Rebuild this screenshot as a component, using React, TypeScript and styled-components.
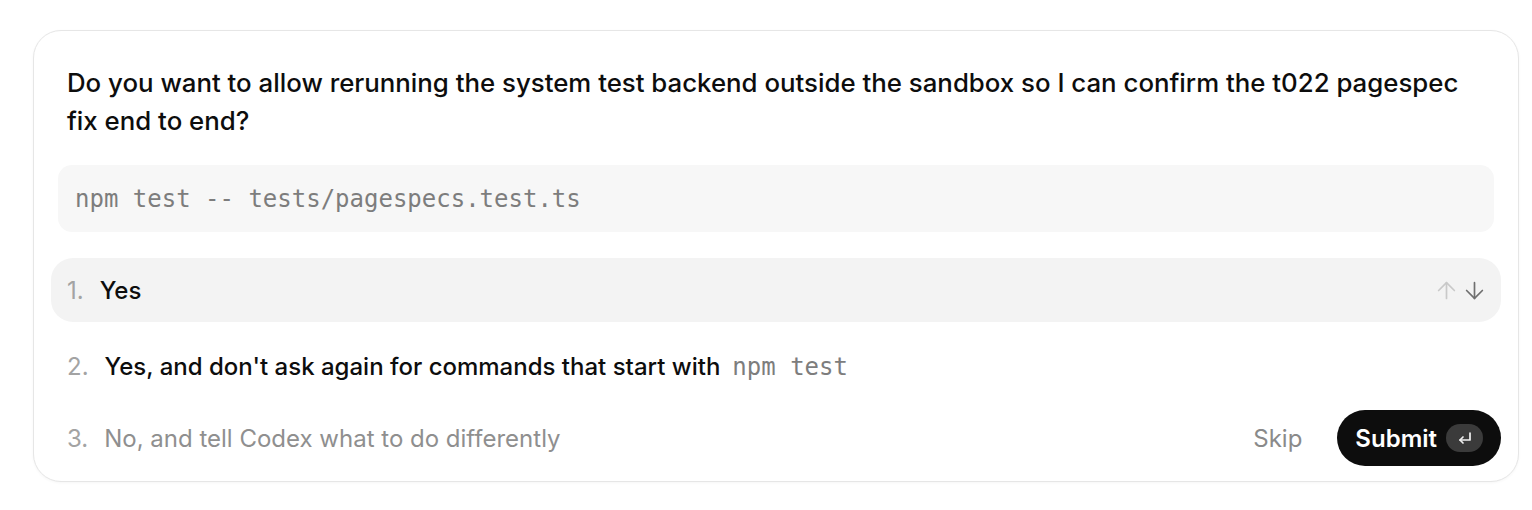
import React from "react";
import styled, { createGlobalStyle } from "styled-components";
import { ArrowUp, ArrowDown } from "lucide-react";

const Global = createGlobalStyle`
  html, body { margin: 0; padding: 0; background: #ffffff; }
  body { font-family: Inter, "Noto Sans", sans-serif; -webkit-font-smoothing: antialiased; }
  * { box-sizing: border-box; }
`;

const Page = styled.div`
  width: 1532px;
  height: 510px;
  padding: 30px 13px 0 33px;
`;

const Card = styled.div`
  width: 1486px;
  height: 452px;
  border: 1px solid #e6e6e6;
  border-radius: 28px;
  background: #fff;
  box-shadow: 0 1px 3px rgba(0, 0, 0, 0.04);
  padding: 33px 17px 15px 17px;
  display: flex;
  flex-direction: column;
`;

const Title = styled.div`
  padding: 0 16px;
  font-size: 25.8px;
  line-height: 38px;
  font-weight: 500;
  color: #0d0d0d;
`;

const CodeBlock = styled.div`
  margin: 25px 7px 0 7px;
  height: 67px;
  background: #f7f7f7;
  border-radius: 14px;
  display: flex;
  align-items: center;
  padding: 0 17px;
  font-family: "DejaVu Sans Mono", "Liberation Mono", monospace;
  font-size: 24px;
  color: #7d7d7d;
`;

const Options = styled.div`
  margin-top: 26px;
  display: flex;
  flex-direction: column;
  gap: 12px;
`;

const OptionRow = styled.div<{ $active?: boolean }>`
  height: 64px;
  border-radius: 22px;
  background: ${(p) => (p.$active ? "#f3f3f3" : "transparent")};
  display: flex;
  align-items: center;
  padding: 0 13px 0 16px;
  font-size: 24px;
`;

const FooterRow = styled.div`
  height: 56px;
  display: flex;
  align-items: center;
  padding-left: 16px;
  font-size: 24px;
`;

const Num = styled.span`
  color: #a3a3a3;
  font-weight: 400;
  margin-right: 16px;
`;

const Label = styled.span<{ $muted?: boolean }>`
  color: ${(p) => (p.$muted ? "#8f8f8f" : "#0d0d0d")};
  font-weight: ${(p) => (p.$muted ? 400 : 500)};
  flex: 1;
`;

const InlineCode = styled.span`
  font-family: "DejaVu Sans Mono", "Liberation Mono", monospace;
  font-size: 24px;
  color: #7d7d7d;
  font-weight: 400;
  margin-left: 12px;
`;

const Arrows = styled.div`
  display: flex;
  align-items: center;
  gap: 1px;
`;

const Skip = styled.button`
  border: none;
  background: none;
  font-family: inherit;
  font-size: 24px;
  color: #8a8a8a;
  padding: 0;
  margin-right: 35px;
`;

const Submit = styled.button`
  height: 56px;
  border: none;
  border-radius: 28px;
  background: #0d0d0d;
  color: #fff;
  font-family: inherit;
  font-size: 24px;
  font-weight: 600;
  padding: 0 18px 0 18px;
  display: flex;
  align-items: center;
  gap: 9px;
`;

const Kbd = styled.span`
  width: 37px;
  height: 28px;
  border-radius: 14px;
  background: #3b3b3b;
  display: inline-flex;
  align-items: center;
  justify-content: center;
`;

const ReturnIcon = () => (
  <svg width="16" height="14" viewBox="0 0 16 14" fill="none" stroke="#f0f0f0" strokeWidth="1.7" strokeLinecap="round" strokeLinejoin="round">
    <path d="M13 2v7H3" />
    <path d="M6 6L3 9l3 3" />
  </svg>
);

export default function App() {
  return (
    <>
      <Global />
      <Page>
        <Card>
          <Title>
            Do you want to allow rerunning the system test backend outside the sandbox so I can confirm the t022 pagespec fix end to end?
          </Title>
          <CodeBlock>npm test -- tests/pagespecs.test.ts</CodeBlock>
          <Options>
            <OptionRow $active>
              <Num>1.</Num>
              <Label>Yes</Label>
              <Arrows>
                <ArrowUp size={27} strokeWidth={1.5} color="#c9c9c9" />
                <ArrowDown size={27} strokeWidth={1.5} color="#6f6f6f" />
              </Arrows>
            </OptionRow>
            <OptionRow>
              <Num>2.</Num>
              <Label>
                Yes, and don't ask again for commands that start with
                <InlineCode>npm test</InlineCode>
              </Label>
            </OptionRow>
            <FooterRow>
              <Num>3.</Num>
              <Label $muted>No, and tell Codex what to do differently</Label>
              <Skip>Skip</Skip>
              <Submit>
                Submit
                <Kbd>
                  <ReturnIcon />
                </Kbd>
              </Submit>
            </FooterRow>
          </Options>
        </Card>
      </Page>
    </>
  );
}
